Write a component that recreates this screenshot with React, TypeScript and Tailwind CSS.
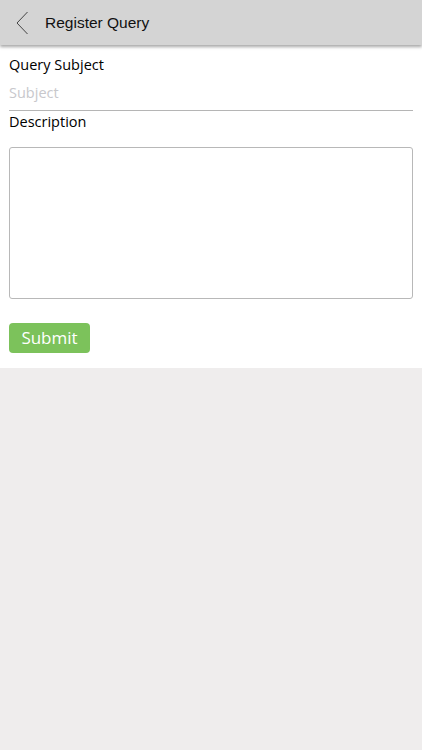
export default function App() {
  return (
    <div className="min-h-[750px] w-[422px] bg-[#efeded] font-['Open_Sans',sans-serif]">
      <div className="relative z-10 flex h-[45px] items-center bg-[#d4d4d4] shadow-[0_2px_3px_rgba(0,0,0,0.35)]">
        <svg width="14" height="24" viewBox="0 0 14 24" className="ml-[15px]">
          <path d="M12.5 1 L2 12 L12.5 23" fill="none" stroke="#444" strokeWidth="1" />
        </svg>
        <h1 className="ml-[16px] font-['Liberation_Sans',Arial,sans-serif] text-[15.5px] text-[#111]">Register Query</h1>
      </div>
      <div className="bg-white px-[9px] pb-[15px] pt-[9px]">
        <label className="block text-[14.5px] leading-[22px] text-black">Query Subject</label>
        <input
          placeholder="Subject"
          className="mt-[4px] block h-[31px] w-full border-b border-[#b5b5b5] pb-[5px] text-[14.5px] text-black outline-none placeholder:text-[#c8c8cc]"
        />
        <label className="block text-[14.5px] leading-[22px] text-black">Description</label>
        <textarea className="mt-[14px] block h-[152px] w-full resize-none rounded-[3px] border border-[#b8b8b8] outline-none" />
        <button className="mt-[24px] h-[30px] w-[81px] rounded-[4px] bg-[#7cc25b] text-[17px] font-medium text-white">
          Submit
        </button>
      </div>
    </div>
  );
}
